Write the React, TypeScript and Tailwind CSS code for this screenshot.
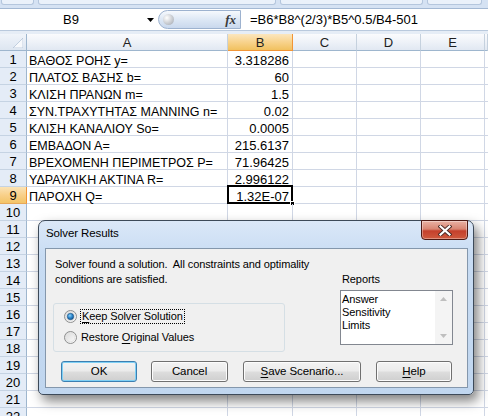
import React from "react";

const rows: [string, string][] = [
  ["ΒΑΘΟΣ ΡΟΗΣ y=", "3.318286"],
  ["ΠΛΑΤΟΣ ΒΑΣΗΣ b=", "60"],
  ["ΚΛΙΣΗ ΠΡΑΝΩΝ m=", "1.5"],
  ["ΣΥΝ.ΤΡΑΧΥΤΗΤΑΣ MANNING n=", "0.02"],
  ["ΚΛΙΣΗ ΚΑΝΑΛΙΟΥ So=", "0.0005"],
  ["ΕΜΒΑΔΟΝ Α=", "215.6137"],
  ["ΒΡΕΧΟΜΕΝΗ ΠΕΡΙΜΕΤΡΟΣ P=", "71.96425"],
  ["ΥΔΡΑΥΛΙΚΗ ΑΚΤΙΝΑ R=", "2.996122"],
  ["ΠΑΡΟΧΗ Q=", "1.32E-07"],
];

function Radio({ checked }: { checked: boolean }) {
  return (
    <svg width="13" height="13" viewBox="0 0 13 13" className="shrink-0">
      <defs>
        <linearGradient id={checked ? "rg1" : "rg0"} x1="0" y1="0" x2="1" y2="1">
          <stop offset="0" stopColor="#d6d6d6" />
          <stop offset="1" stopColor="#ffffff" />
        </linearGradient>
        <radialGradient id="dot" cx="0.4" cy="0.35" r="0.7">
          <stop offset="0" stopColor="#8fd0f5" />
          <stop offset="0.5" stopColor="#2f8ad0" />
          <stop offset="1" stopColor="#0f4f8a" />
        </radialGradient>
      </defs>
      <circle cx="6.5" cy="6.5" r="6" fill={`url(#${checked ? "rg1" : "rg0"})`} stroke="#8e8f8f" strokeWidth="1" />
      <circle cx="6.5" cy="6.5" r="4.3" fill="none" stroke="#e4e4e4" strokeWidth="1" />
      {checked && <circle cx="6.5" cy="6.5" r="3.2" fill="url(#dot)" stroke="#1c4f7e" strokeWidth="0.6" />}
    </svg>
  );
}

function Btn({ children, def, w }: { children: React.ReactNode; def?: boolean; w: string }) {
  return (
    <div
      className={`${w} h-[21px] rounded-[3px] border flex items-center justify-center text-[11.5px] leading-none bg-[linear-gradient(to_bottom,#f3f3f3_0%,#ebebeb_48%,#dddddd_52%,#cfcfcf_100%)] ${
        def ? "border-[#3c7fb1] shadow-[inset_0_0_0_1px_#7fd0f5]" : "border-[#707070] shadow-[inset_0_0_0_1px_#fcfcfc]"
      }`}
    >
      {children}
    </div>
  );
}

export default function App() {
  const gridRows = Array.from({ length: 22 }, (_, i) => i + 1);
  return (
    <div className="relative w-[488px] h-[416px] overflow-hidden bg-white font-['Liberation_Sans',Arial,sans-serif] text-[13px] text-black">
      {/* ribbon bottom */}
      <div className="h-[9px] bg-[#d5e2f3] border-b border-[#a3b8d3] flex items-start gap-[4px] px-[1px]">
        <div className="w-[33px] h-[5px] bg-[#eaf1fa] border border-t-0 border-[#b4c6dd] rounded-b-[3px]" />
        <div className="w-[238px] h-[5px] bg-[#eaf1fa] border border-t-0 border-[#b4c6dd] rounded-b-[3px]" />
        <div className="w-[143px] h-[5px] bg-[#eaf1fa] border border-t-0 border-[#b4c6dd] rounded-b-[3px]" />
        <div className="w-[55px] h-[5px] bg-[#eaf1fa] border border-t-0 border-[#b4c6dd] rounded-b-[3px]" />
      </div>
      {/* formula bar */}
      <div className="h-[22px] flex bg-white border-b border-[#b9c9dd]">
        <div className="w-[142px] flex items-center justify-center leading-none">B9</div>
        <div className="w-[16px] flex items-center justify-center">
          <svg width="7" height="4" viewBox="0 0 7 4">
            <path d="M0 0h7L3.5 4z" fill="#000" />
          </svg>
        </div>
        <div className="w-[83px] h-[19px] self-center rounded-l-full border border-[#9db2cf] bg-[linear-gradient(to_bottom,#f6f9fd,#dbe6f4_55%,#c9d8ed)] flex items-center justify-between pl-[4px] pr-[4px]">
          <div className="w-[11px] h-[11px] rounded-full bg-[radial-gradient(circle_at_35%_35%,#ffffff,#c9ccd1_55%,#9ea4ad)]" />
          <span className="font-['Liberation_Serif',serif] italic font-bold text-[13px] text-[#3a3a3a] leading-none">fx</span>
        </div>
        <div className="flex-1 pl-[9px] flex items-center leading-none">=B6*B8^(2/3)*B5^0.5/B4-501</div>
      </div>
      <div className="h-[3px] bg-[#e6edf6]" />
      {/* header row */}
      <div className="h-[17px] flex">
        <div className="w-[27px] h-full border-r border-b border-[#9eb6ce] bg-[linear-gradient(to_bottom,#f0f4fa,#dde6f1)] relative">
          <svg width="10" height="10" viewBox="0 0 10 10" className="absolute right-[3px] bottom-[2px]">
            <path d="M10 0V10H0z" fill="#f7f9fc" stroke="#b5c5d8" strokeWidth="0.8" />
          </svg>
        </div>
        {[
          ["A", "w-[201px]", false],
          ["B", "w-[65px]", true],
          ["C", "w-[64px]", false],
          ["D", "w-[64px]", false],
          ["E", "w-[64px]", false],
          ["", "flex-1", false],
        ].map(([l, w, sel], i) => (
          <div
            key={i}
            className={`${w} h-full flex items-center justify-center border-r border-b leading-none ${
              sel
                ? "bg-[linear-gradient(to_bottom,#fbe6be,#f8d38d_50%,#f1c15f)] border-[#f29536] border-b-[#f29536] text-[#1e1e1e]"
                : "bg-[linear-gradient(to_bottom,#fafbfd,#eef2f8_50%,#e1e8f2)] border-r-[#c5d1de] border-b-[#9eb6ce] text-[#1e1e1e]"
            }`}
          >
            {l as string}
          </div>
        ))}
      </div>
      {/* grid */}
      {gridRows.map((r) => {
        const d = rows[r - 1];
        const sel = r === 9;
        return (
          <div key={r} className="h-[17px] flex">
            <div
              className={`w-[27px] h-full border-r border-b flex items-center justify-center leading-none ${
                sel
                  ? "bg-[linear-gradient(to_bottom,#fbe3b5,#f8d08a_50%,#f3c467)] border-r-[#f29536] border-b-[#e6a85a]"
                  : "bg-[#e4ecf7] border-r-[#9eb6ce] border-b-[#c5d3e3]"
              }`}
            >
              {r}
            </div>
            <div className="w-[201px] h-full border-r border-b border-[#d0d7e5] pl-[2px] pt-[3px] leading-[14px] text-[12.5px] whitespace-nowrap overflow-visible">
              {d ? d[0] : ""}
            </div>
            <div className="w-[65px] h-full border-r border-b border-[#d0d7e5] pr-[3px] pt-[3px] leading-[14px] text-right relative">
              {d ? d[1] : ""}
              {sel && (
                <>
                  <div className="absolute -left-[1px] -top-[2px] -right-[1px] -bottom-[1px] border-[2px] border-black" />
                  <div className="absolute -right-[3px] -bottom-[3px] w-[5px] h-[5px] bg-black border border-white" />
                </>
              )}
            </div>
            <div className="w-[64px] h-full border-r border-b border-[#d0d7e5]" />
            <div className="w-[64px] h-full border-r border-b border-[#d0d7e5]" />
            <div className="w-[64px] h-full border-r border-b border-[#d0d7e5]" />
            <div className="flex-1 h-full border-b border-[#d0d7e5]" />
          </div>
        );
      })}

      {/* dialog */}
      <div className="absolute left-[38px] top-[220px] w-[436px] h-[175px] rounded-t-[7px] rounded-b-[5px] border border-[#3d4a59] bg-[linear-gradient(to_bottom,#dbe8f8,#c8dcf3_20%,#c0d6ef)] shadow-[4px_6px_12px_rgba(0,0,0,0.5)] text-[11px] tracking-[-0.1px] font-['Liberation_Sans',Arial,sans-serif]">
        <div className="h-[26px] pl-[7px] pt-[5px] leading-[15px] text-[11.5px] text-black">Solver Results</div>
        <div className="absolute -top-[1px] right-[5px] w-[47px] h-[20px] rounded-b-[4px] border border-[#4d1a14] bg-[linear-gradient(to_bottom,#e9b2a4,#d88572_45%,#c4402c_55%,#cf5a3e)] flex items-center justify-center shadow-[inset_0_0_0_1px_rgba(255,255,255,0.35)]">
          <svg width="14" height="11" viewBox="0 0 14 11">
            <path d="M2.5 1.5L11.5 9.5M11.5 1.5L2.5 9.5" stroke="#4a2a25" strokeWidth="4" strokeLinecap="square" />
            <path d="M2.5 1.5L11.5 9.5M11.5 1.5L2.5 9.5" stroke="#ffffff" strokeWidth="2.2" strokeLinecap="square" />
          </svg>
        </div>
        <div className="ml-[6px] mr-[5px] mt-[1px] h-[140px] border border-[#8497ac] bg-[#f0f0f0]">
          <div className="flex pl-[7px]">
            <div className="w-[287px] pt-[8px]">
              <div className="pl-[2px] leading-[15px] whitespace-nowrap">
                <div>Solver found a solution.&nbsp; All constraints and optimality</div>
                <div>conditions are satisfied.</div>
              </div>
              <div className="mt-[16px] w-[232px] h-[49px] border border-[#d5dfe5] rounded-[3px] pl-[10px] pt-[5px]">
                <div className="h-[14px] flex items-center gap-[3px]">
                  <Radio checked />
                  <span className="border border-dotted border-black px-[1px] leading-[13px]">
                    <span className="underline underline-offset-[2px]">K</span>eep Solver Solution
                  </span>
                </div>
                <div className="h-[14px] mt-[7px] flex items-center gap-[4px]">
                  <Radio checked={false} />
                  <span className="leading-[13px]">
                    Restore <span className="underline underline-offset-[2px]">O</span>riginal Values
                  </span>
                </div>
              </div>
            </div>
            <div className="w-[113px] pt-[23px]">
              <div className="pl-[2px] leading-[15px]">Reports</div>
              <div className="mt-[3px] h-[55px] border border-[#828790] bg-white flex">
                <div className="flex-1 pl-[1px] pt-[2px] leading-[13px]">
                  <div>Answer</div>
                  <div>Sensitivity</div>
                  <div>Limits</div>
                </div>
                <div className="w-[17px] h-full bg-[#f4f4f4] flex flex-col items-center justify-between py-[6px]">
                  <svg width="7" height="4" viewBox="0 0 7 4">
                    <path d="M0 4h7L3.5 0z" fill="#bfbfbf" />
                  </svg>
                  <svg width="7" height="4" viewBox="0 0 7 4">
                    <path d="M0 0h7L3.5 4z" fill="#bfbfbf" />
                  </svg>
                </div>
              </div>
            </div>
          </div>
          <div className="flex mt-[9px] pl-[15px]">
            <Btn def w="w-[76px]">OK</Btn>
            <div className="w-[14px]" />
            <Btn w="w-[77px]">Cancel</Btn>
            <div className="w-[15px]" />
            <Btn w="w-[118px]">
              <span>
                <span className="underline underline-offset-[2px]">S</span>ave Scenario...
              </span>
            </Btn>
            <div className="w-[15px]" />
            <Btn w="w-[76px]">
              <span>
                <span className="underline underline-offset-[2px]">H</span>elp
              </span>
            </Btn>
          </div>
        </div>
      </div>
    </div>
  );
}
